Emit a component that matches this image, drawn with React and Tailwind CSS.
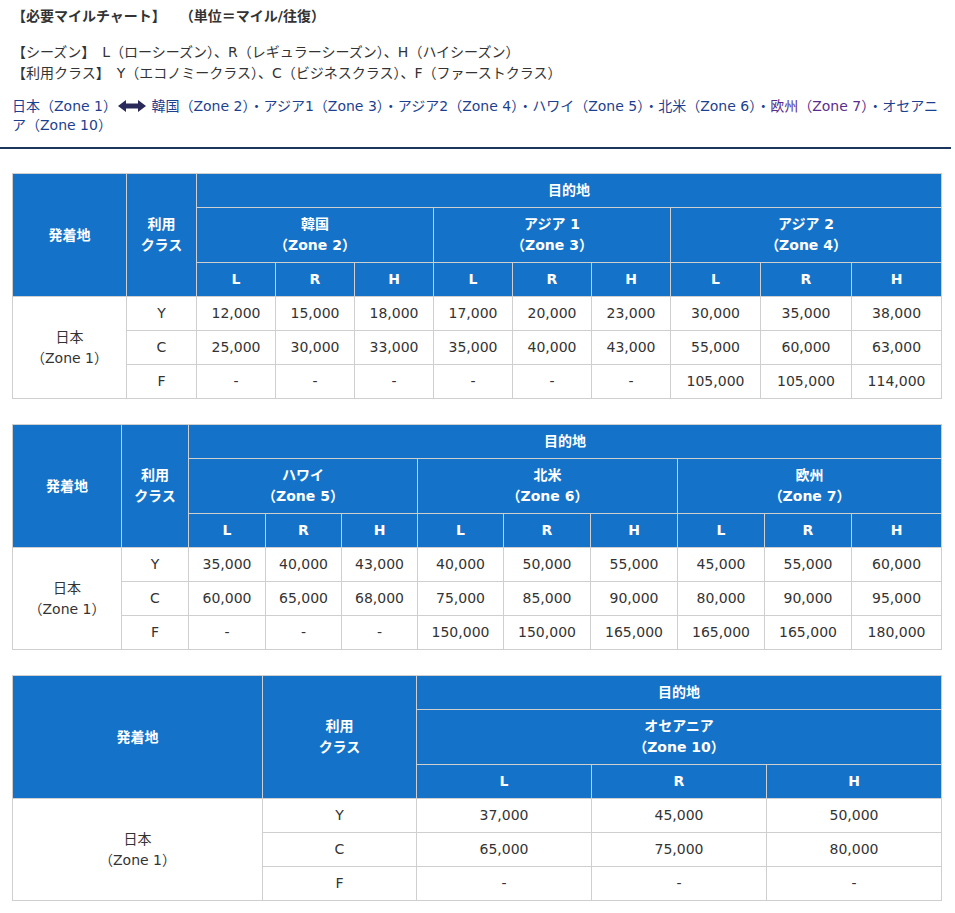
import React from "react";

const F = { fontFamily: '"DejaVu Sans","Noto Sans CJK JP",sans-serif' };
const th = "bg-[#1473c9] text-white font-bold border border-[#cfcfcf] text-center text-[14px]";
const td = "border border-[#cfcfcf] text-center text-[14px] text-[#333] h-[34px]";

function Table({ cols, dests, data }) {
  const n = dests.length * 3;
  return (
    <table className="border-collapse table-fixed w-[929px] ml-3">
      <colgroup>{cols.map((w, i) => <col key={i} style={{ width: w }} />)}</colgroup>
      <tbody>
        <tr className="h-[34px]">
          <th rowSpan={3} className={th}>発着地</th>
          <th rowSpan={3} className={th + " leading-[21px]"}>利用<br />クラス</th>
          <th colSpan={n} className={th}>目的地</th>
        </tr>
        <tr className="h-[55px]">
          {dests.map((d, i) => (
            <th key={i} colSpan={3} className={th + " leading-[21px]"}>{d[0]}<br />{d[1]}</th>
          ))}
        </tr>
        <tr className="h-[34px]">
          {dests.flatMap((d, i) => ["L", "R", "H"].map(s => <th key={i + s} className={th}>{s}</th>))}
        </tr>
        {["Y", "C", "F"].map((c, ri) => (
          <tr key={c}>
            {ri === 0 && <td rowSpan={3} className={td + " leading-[21px]"}>日本<br />（Zone 1）</td>}
            <td className={td}>{c}</td>
            {data[ri].map((v, j) => <td key={j} className={td}>{v}</td>)}
          </tr>
        ))}
      </tbody>
    </table>
  );
}

export default function App() {
  const link = "text-[#1d3f8f]";
  return (
    <div className="bg-white w-[955px] h-[913px] text-[#333] text-[14px]" style={F}>
      <div className="px-3 pt-[6px]">
        <div className="font-bold h-[20px] leading-[20px]">【必要マイルチャート】　　（単位＝マイル/往復）</div>
        <div className="mt-[16px] leading-[21px]">
          <div>【シーズン】　L（ローシーズン）、R（レギュラーシーズン）、H（ハイシーズン）</div>
          <div>【利用クラス】　Y（エコノミークラス）、C（ビジネスクラス）、F（ファーストクラス）</div>
        </div>
        <div className={"mt-[13px] leading-[19px] " + link}>
          日本（Zone 1）
          <svg width="28" height="12" viewBox="0 0 28 12" className="inline-block align-[-1px] mx-[1px]">
            <path d="M0 6 L8 0 L8 3.5 L20 3.5 L20 0 L28 6 L20 12 L20 8.5 L8 8.5 L8 12 Z" fill="#2a2a5a" />
          </svg>
          {" "}韓国（Zone 2）・アジア1（Zone 3）・アジア2（Zone 4）・ハワイ（Zone 5）・北米（Zone 6）・<span className="text-[#5a2d8c]">欧州（Zone 7）</span>・オセアニア（Zone 10）
        </div>
      </div>
      <div className="mt-[12px] h-[2px] bg-[#1b365d] w-[951px]" />
      <div className="pt-[24px]">
        <Table cols={[114, 70, 79, 79, 79, 79, 79, 79, 90, 91, 90]}
          dests={[["韓国", "（Zone 2）"], ["アジア 1", "（Zone 3）"], ["アジア 2", "（Zone 4）"]]}
          data={[["12,000", "15,000", "18,000", "17,000", "20,000", "23,000", "30,000", "35,000", "38,000"],
          ["25,000", "30,000", "33,000", "35,000", "40,000", "43,000", "55,000", "60,000", "63,000"],
          ["-", "-", "-", "-", "-", "-", "105,000", "105,000", "114,000"]]} />
      </div>
      <div className="pt-[25px]">
        <Table cols={[109, 67, 77, 76, 76, 86, 87, 87, 87, 87, 90]}
          dests={[["ハワイ", "（Zone 5）"], ["北米", "（Zone 6）"], ["欧州", "（Zone 7）"]]}
          data={[["35,000", "40,000", "43,000", "40,000", "50,000", "55,000", "45,000", "55,000", "60,000"],
          ["60,000", "65,000", "68,000", "75,000", "85,000", "90,000", "80,000", "90,000", "95,000"],
          ["-", "-", "-", "150,000", "150,000", "165,000", "165,000", "165,000", "180,000"]]} />
      </div>
      <div className="pt-[25px]">
        <Table cols={[250, 154, 175, 175, 175]}
          dests={[["オセアニア", "（Zone 10）"]]}
          data={[["37,000", "45,000", "50,000"], ["65,000", "75,000", "80,000"], ["-", "-", "-"]]} />
      </div>
    </div>
  );
}
